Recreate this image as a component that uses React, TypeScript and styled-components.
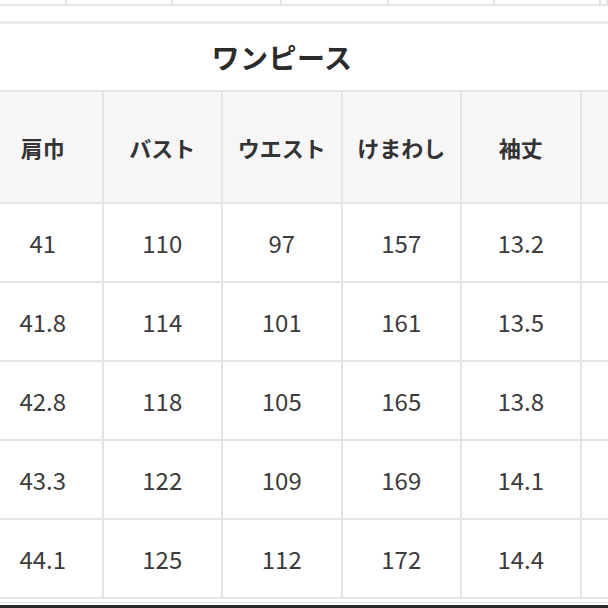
import React from 'react';
import styled, { createGlobalStyle } from 'styled-components';

const GlobalStyle = createGlobalStyle`
  html, body {
    margin: 0;
    padding: 0;
    background: #ffffff;
  }
  body {
    font-family: "Noto Sans CJK JP", "Noto Sans", sans-serif;
  }
`;

const LINE = '#e4e4e4';

const Page = styled.div`
  width: 608px;
  height: 608px;
  overflow: hidden;
  display: flex;
  flex-direction: column;
  background: #fff;
`;

// bottom edge of the table above, cut off by the screenshot
const PrevRow = styled.div`
  display: grid;
  grid-template-columns: 67px 106px 109px 107px 106px 106px 1fr;
  height: 6px;
  flex-shrink: 0;
`;

const PrevCell = styled.div`
  border-right: 2px solid ${LINE};
  border-bottom: 2px solid ${LINE};
`;

const TitleBar = styled.div`
  margin-top: 15px;
  height: 66px;
  flex-shrink: 0;
  border-top: 3px solid #ececec;
  display: flex;
  align-items: center;
  justify-content: center;
  padding-right: 44px;
  font-size: 28px;
  font-weight: 700;
  color: #2b2b2b;
  letter-spacing: 0.5px;
`;

const Table = styled.div`
  margin-left: -16px;
  display: grid;
  grid-template-columns: repeat(6, 119.5px);
  border-top: 2px solid ${LINE};
  flex-shrink: 0;
`;

const Cell = styled.div<{ $head?: boolean }>`
  height: ${(p) => (p.$head ? 110 : 77)}px;
  border-right: 2px solid ${LINE};
  border-bottom: 2px solid ${LINE};
  background: ${(p) => (p.$head ? '#f6f6f6' : '#ffffff')};
  display: flex;
  align-items: center;
  justify-content: center;
  font-size: ${(p) => (p.$head ? 22 : 24)}px;
  font-weight: ${(p) => (p.$head ? 700 : 400)};
  color: ${(p) => (p.$head ? '#333333' : '#3c3c3c')};
  box-sizing: content-box;
`;

const Footer = styled.div`
  margin-top: 3px;
  border-top: 1px solid #e8e8e8;
  height: 2px;
  flex-shrink: 0;
`;

const DarkEdge = styled.div`
  flex: 1;
  background: #2a2a2a;
`;

const headers = ['肩巾', 'バスト', 'ウエスト', 'けまわし', '袖丈', ''];

const rows = [
  ['41', '110', '97', '157', '13.2', ''],
  ['41.8', '114', '101', '161', '13.5', ''],
  ['42.8', '118', '105', '165', '13.8', ''],
  ['43.3', '122', '109', '169', '14.1', ''],
  ['44.1', '125', '112', '172', '14.4', ''],
];

export default function App() {
  return (
    <>
      <GlobalStyle />
      <Page>
        <PrevRow>
          {Array.from({ length: 7 }).map((_, i) => (
            <PrevCell key={i} />
          ))}
        </PrevRow>
        <TitleBar>ワンピース</TitleBar>
        <Table>
          {headers.map((h, i) => (
            <Cell $head key={'h' + i}>
              {h}
            </Cell>
          ))}
          {rows.map((r, ri) =>
            r.map((v, ci) => <Cell key={ri + '-' + ci}>{v}</Cell>)
          )}
        </Table>
        <Footer />
        <DarkEdge />
      </Page>
    </>
  );
}
